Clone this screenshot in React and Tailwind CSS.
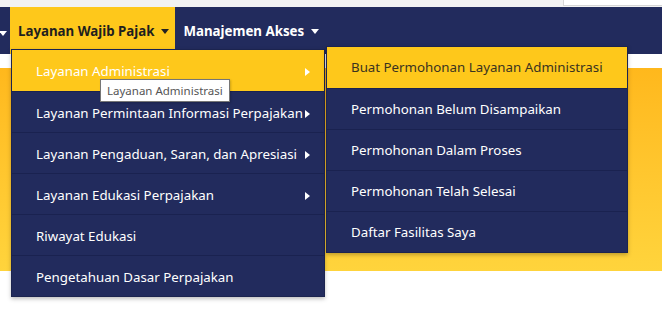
const leftItems = [
  { label: 'Layanan Administrasi', sub: true, active: true },
  { label: 'Layanan Permintaan Informasi Perpajakan', sub: true },
  { label: 'Layanan Pengaduan, Saran, dan Apresiasi', sub: true },
  { label: 'Layanan Edukasi Perpajakan', sub: true },
  { label: 'Riwayat Edukasi' },
  { label: 'Pengetahuan Dasar Perpajakan' },
];

const subItems = [
  'Buat Permohonan Layanan Administrasi',
  'Permohonan Belum Disampaikan',
  'Permohonan Dalam Proses',
  'Permohonan Telah Selesai',
  'Daftar Fasilitas Saya',
];

const Caret = ({ dark }) => (
  <span
    className={`inline-block w-0 h-0 border-t-[5px] border-x-[4px] border-x-transparent ${dark ? 'border-t-[#222]' : 'border-t-white'}`}
  />
);

const RightArrow = () => (
  <span className="inline-block w-0 h-0 border-l-[5px] border-y-[4px] border-y-transparent border-l-white" />
);

const App = () => {
  return (
    <div
      className="relative w-[662px] h-[323px] overflow-hidden bg-white text-[13.3px]"
      style={{ fontFamily: '"Noto Sans", "Open Sans", sans-serif' }}
    >
      {/* Browser-ish top strip */}
      <div className="h-[7px] bg-[#f2f2f2] flex justify-end">
        <div className="w-[99px] h-[6px] bg-white border-b border-l border-[#d6d6d6]" />
      </div>

      {/* Navbar */}
      <nav className="relative z-10 h-[47px] bg-[#222b5d] flex items-stretch">
        <div className="w-[10px] flex items-center justify-start pt-[2px]">
          <span className="-ml-[1px]"><Caret /></span>
        </div>

        <div className="relative bg-[#fec81b] flex items-center gap-[7px] pl-[8px] pr-[6px] pt-[2px] text-[#1f1f1f] font-bold">
          Layanan Wajib Pajak <Caret dark />

          {/* Dropdown */}
          <div className="absolute left-[1px] top-[42px] w-[314px] bg-[#222b5d] border border-black/15 shadow-[0_2px_4px_rgba(0,0,0,0.25)] font-normal">
            {leftItems.map((item, i) => (
              <div
                key={item.label}
                className={`relative h-[41px] flex items-center justify-between pl-[24px] pr-[14px] pt-[3px] ${
                  item.active ? 'bg-[#fec81b] text-white' : 'text-white'
                } ${i > 0 ? 'border-t border-[#1a2250]' : ''}`}
              >
                <span className="whitespace-nowrap">{item.label}</span>
                {item.sub && <RightArrow />}

                {item.active && (
                  <>
                    {/* Submenu */}
                    <div className="absolute left-[314px] -top-[4px] w-[302px] bg-[#222b5d] border border-black/15 shadow-[0_2px_4px_rgba(0,0,0,0.25)]">
                      {subItems.map((s, j) => (
                        <div
                          key={s}
                          className={`h-[41px] flex items-center pl-[24px] pt-[1px] whitespace-nowrap ${
                            j === 0 ? 'bg-[#fec81b] text-[#3a3320]' : 'text-white border-t border-[#1a2250]'
                          }`}
                        >
                          {s}
                        </div>
                      ))}
                    </div>

                    {/* Tooltip */}
                    <div className="absolute left-[88px] top-[29px] z-20 bg-white border border-[#767676] px-[6px] h-[23px] flex items-center text-[11.5px] text-[#555] whitespace-nowrap shadow-[1px_1px_2px_rgba(0,0,0,0.2)]">
                      Layanan Administrasi
                    </div>
                  </>
                )}
              </div>
            ))}
          </div>
        </div>

        <div className="flex items-center gap-[7px] pl-[8px] pt-[2px] text-white font-bold">
          Manajemen Akses <Caret />
        </div>
      </nav>

      {/* Page content behind */}
      <div className="h-[14px] bg-white" />
      <div className="h-[203px] bg-gradient-to-b from-[#ffb81c] to-[#ffd43c]" />
    </div>
  );
};

export default App;
